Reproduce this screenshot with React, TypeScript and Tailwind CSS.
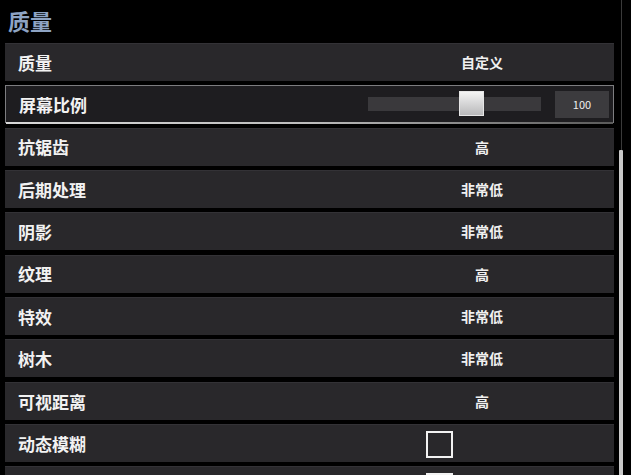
// Graphics quality settings panel (game options, dark theme).
const font = { fontFamily: '"Noto Sans CJK SC", "Noto Sans", sans-serif' };

type Row =
  | { label: string; kind: 'text'; value: string }
  | { label: string; kind: 'slider'; value: number }
  | { label: string; kind: 'check'; checked: boolean };

const rows: Row[] = [
  { label: '质量', kind: 'text', value: '自定义' },
  { label: '屏幕比例', kind: 'slider', value: 100 },
  { label: '抗锯齿', kind: 'text', value: '高' },
  { label: '后期处理', kind: 'text', value: '非常低' },
  { label: '阴影', kind: 'text', value: '非常低' },
  { label: '纹理', kind: 'text', value: '高' },
  { label: '特效', kind: 'text', value: '非常低' },
  { label: '树木', kind: 'text', value: '非常低' },
  { label: '可视距离', kind: 'text', value: '高' },
  { label: '动态模糊', kind: 'check', checked: false },
  { label: '垂直同步', kind: 'check', checked: false },
];

function SettingRow({ row }: { row: Row }) {
  const active = row.kind === 'slider';
  return (
    <div
      className={`relative shrink-0 h-[38px] flex items-center ${
        active ? 'bg-[#1e1d20] border border-[#7d7d80]' : 'bg-[#29282b] border-t border-[#333236]'
      }`}
    >
      {/* Label */}
      <span className="w-[160px] pl-[13px] text-[17px] font-bold text-[#f2f2f2]">{row.label}</span>

      {/* Value */}
      {row.kind === 'text' && (
        <span className="absolute left-[427px] w-[100px] text-center text-[14px] font-bold text-[#f0f0f0]">
          {row.value}
        </span>
      )}
      {row.kind === 'check' && (
        <span className="absolute left-[421px] top-[6px] w-[27px] h-[27px] border-2 border-[#f2f2f2] bg-[#29282b]" />
      )}
      {row.kind === 'slider' && (
        <div className="ml-auto flex items-center pr-[4px]">
          <div className="relative w-[173px] h-[14px] bg-[#3a393c]">
            <div className="absolute left-[91px] top-[-6px] w-[25px] h-[25px] bg-gradient-to-b from-[#f4f4f4] to-[#b9b9bb] border border-[#e6e6e6]" />
          </div>
          <div className="ml-[14px] w-[54px] h-[27px] bg-[#3c3b3e] flex items-center justify-center text-[11px] text-[#eeeeee]">
            {row.value}
          </div>
        </div>
      )}

      {active && (
        <div className="absolute left-0 right-0 bottom-[-2px] h-[2px] bg-gradient-to-r from-[#d8d8d8] via-[#bdbdbd] to-[#5a5a5a]" />
      )}
    </div>
  );
}

export default function App() {
  return (
    <div className="w-[631px] h-[475px] bg-black overflow-hidden flex" style={font}>
      <div className="w-[614px] flex flex-col">
        <h1 className="h-[43px] shrink-0 pl-[8px] pt-[2px] text-[22px] font-bold text-[#8ea4c4] leading-[36px]">
          质量
        </h1>
        <div className="ml-[5px] w-[609px] flex flex-col gap-[4.35px]">
          {rows.map((r) => (
            <SettingRow key={r.label} row={r} />
          ))}
        </div>
      </div>

      {/* Scrollbar */}
      <div className="ml-[5px] w-[4px] h-full flex flex-col items-center">
        <div className="w-px h-[150px] bg-[#3a3a3a]" />
        <div className="w-[4px] flex-1 bg-[#c9c9c9] rounded-t-[1px]" />
      </div>
    </div>
  );
}
